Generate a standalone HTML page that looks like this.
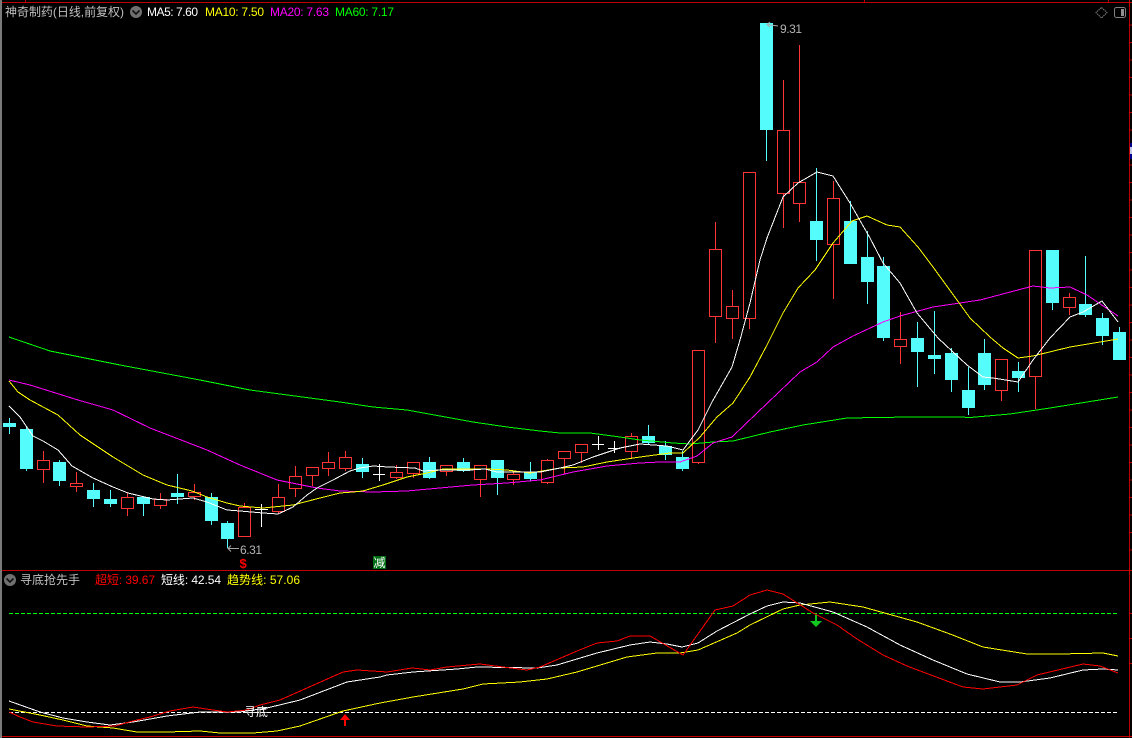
<!DOCTYPE html>
<html><head><meta charset="utf-8"><style>
html,body{margin:0;padding:0;background:#000;width:1132px;height:738px;overflow:hidden}
svg{display:block}
text{font-family:"Liberation Sans","Noto Sans CJK SC","WenQuanYi Zen Hei",sans-serif;font-size:12px}
</style></head><body>
<svg width="1132" height="738" viewBox="0 0 1132 738" xmlns="http://www.w3.org/2000/svg">
<rect width="1132" height="738" fill="#000"/>
<rect x="0" y="0" width="2" height="738" fill="#7a7a7a"/>
<g shape-rendering="crispEdges" fill="none">
<path stroke="#c00000" d="M2 2.5H1132M2 570.5H1132M2 736.5H1132M1129.5 0V738M25.5 0V2M864.5 0V2M1108.5 0V2M1130 613.5h2M1130 638.5h2M1130 663.5h2M1130 570.5h2"/>
<path stroke="#c00000" stroke-width="3" stroke-dasharray="1 16.5" d="M1131 24.5V560" />
<rect x="1130" y="143" width="2" height="16" fill="#000090"/>
<rect x="1130" y="147" width="2" height="7" fill="#c8c8e8"/>

<!-- cyan candles -->
<path stroke="#54fcfc" d="M9.5 418V434M26.5 427V471M59.5 460V486M93.5 483V507M110.5 490V507M143.5 496V516M177.5 474V504M211.5 493V525M227.5 521V548M362.5 458V478M429.5 457V479M463.5 458V472M497.5 460V495M530.5 462V481M648.5 425V445M665.5 441V460M682.5 451V471M766.5 23V161M816.5 168V261M850.5 201V264M867.5 231V304M883.5 257V341M917.5 322V387M934.5 311V374M951.5 348V392M968.5 367V415M984.5 339V390M1018.5 362V392M1052.5 250V310M1085.5 256V317M1102.5 313V345M1119.5 327V360"/>
<path fill="#54fcfc" d="M3 423h13v4h-13zM20 429h13v40h-13zM53 462h13v19h-13zM87 490h13v9h-13zM104 499h13v5h-13zM137 497h13v7h-13zM171 493h13v4h-13zM205 497h13v24h-13zM221 523h13v16h-13zM356 464h13v8h-13zM423 462h13v16h-13zM457 462h13v9h-13zM491 460h13v18h-13zM524 472h13v7h-13zM642 436h13v7h-13zM659 446h13v9h-13zM676 457h13v12h-13zM760 23h13v107h-13zM810 221h13v19h-13zM844 221h13v43h-13zM861 257h13v25h-13zM877 266h13v72h-13zM911 338h13v14h-13zM928 355h13v4h-13zM945 353h13v27h-13zM962 390h13v18h-13zM978 353h13v32h-13zM1012 371h13v7h-13zM1046 250h13v53h-13zM1079 304h13v11h-13zM1096 318h13v18h-13zM1113 332h13v28h-13z"/>

<!-- red candles -->
<path stroke="#ff3434" d="M37.5 460.5h12v9h-12zM43.5 451V460M43.5 470V483
M70.5 483.5h12v3h-12zM76.5 472V483M76.5 487V492
M121.5 497.5h12v11h-12zM127.5 493V497M127.5 509V516
M154.5 499.5h12v6h-12zM160.5 493V499M160.5 506V509
M188.5 492.5h12v4h-12zM194.5 484V492M194.5 497V500
M238.5 507.5h12v29h-12zM244.5 503V507
M272.5 497.5h12v14h-12zM278.5 484V497M278.5 512V514
M289.5 476.5h12v12h-12zM295.5 466V476M295.5 489V497
M306.5 467.5h12v8h-12zM312.5 476V486
M322.5 462.5h12v6h-12zM328.5 452V462M328.5 469V476
M339.5 457.5h12v11h-12zM345.5 451V457M345.5 469V471
M390.5 472.5h12v5h-12zM396.5 465V472M396.5 478V479
M407.5 462.5h12v11h-12zM413.5 474V478
M440.5 465.5h12v6h-12zM446.5 472V476
M474.5 465.5h12v14h-12zM480.5 480V497
M507.5 474.5h12v5h-12zM513.5 472V474M513.5 480V485
M541.5 460.5h12v22h-12zM547.5 459V460M547.5 483V484
M558.5 451.5h12v7h-12zM564.5 459V474
M575.5 444.5h12v8h-12zM581.5 453V463
M625.5 436.5h12v15h-12zM631.5 433V436M631.5 452V458
M692.5 350.5h12v112h-12zM698.5 463V464
M709.5 249.5h12v67h-12zM715.5 222V249M715.5 317V343
M726.5 306.5h12v12h-12zM732.5 290V306M732.5 319V339
M743.5 172.5h12v146h-12zM749.5 319V329
M777.5 130.5h12v63h-12zM783.5 80V130M783.5 194V228
M793.5 182.5h12v21h-12zM799.5 45V182M799.5 204V222
M827.5 198.5h12v46h-12zM833.5 181V198M833.5 245V299
M894.5 339.5h12v7h-12zM900.5 312V339M900.5 347V364
M995.5 359.5h12v31h-12zM1001.5 391V401
M1029.5 250.5h12v126h-12zM1035.5 377V409
M1063.5 297.5h12v10h-12zM1069.5 293V297M1069.5 308V315"/>

<!-- white doji -->
<path stroke="#fff" d="M255 509.5H268M261.5 504V527M373 474.5H385M379.5 464V481M592 444.5H604M598.5 436V450M608 448.5H620M614.5 441V453"/>

<!-- MA lines -->
<polyline stroke="#00ff00" points="9,337 50,351 120,365 200,380 250,390 325,400 340,402 373,407 407,410 440,416 473,422 507,427 540,431 560,433 590,433 620,437 640,440 673,443 690,444 713,442 733,441 770,432 803,425 847,418 910,417 960,417 970,417.5 1010,414 1050,408 1087,402 1118,397"/>
<polyline stroke="#ff00ff" points="9,380 30,385 78,400 113,410 150,428 207,450 240,465 277,480 317,488 340,491 373,492 407,491 440,488 473,485 507,483 540,480 573,472 607,466 640,463 660,462 680,462 697,456 713,443 732,437 757,413 800,372 817,362 833,347 853,336 883,322 900,316 933,307 980,300 1033,286 1050,288 1070,287 1087,295 1118,316"/>
<polyline stroke="#ffff00" points="9,381 18,392 30,400 58,415 80,435 113,457 143,475 167,485 192,491 207,497 227,503 240,506 263,508 293,505 320,498 340,493 353,492 363,491 383,485 407,477 427,473 443,469 487,469 507,470 530,473 560,468 583,467 607,462 640,457 670,453 683,453 700,437 717,417 733,403 750,377 767,345 783,313 798,288 815,270 833,243 852,221 867,216 887,225 900,227 918,247 933,267 957,300 970,318 990,337 1003,348 1018,358 1033,356 1070,347 1100,342 1118,339"/>
<polyline stroke="#ffffff" points="9,406 20,417 33,436 43,441 58,450 72,466 93,478 113,487 128,493 153,499 167,500 193,498 207,502 227,510 240,511 263,513 278,514 293,507 307,495 317,488 333,480 350,471 360,468 373,466 388,467 415,468 423,471 440,470 470,470 485,469 497,472 520,472 540,472 560,468 573,465 593,457 620,448 640,444 667,446 683,450 698,430 712,402 732,367 740,340 750,303 760,260 767,238 783,197 798,183 817,172 833,176 850,203 870,238 883,263 900,283 917,313 938,338 967,365 983,377 993,378 1018,382 1033,360 1050,338 1070,317 1083,312 1102,301 1118,322"/>

<!-- lower panel dashed -->
<path stroke="#00ff00" stroke-dasharray="4 2" d="M9 613.5H1118"/>
<path stroke="#ffffff" stroke-dasharray="4 2" d="M9 712.5H1118"/>

<polyline stroke="#ffff00" points="9,709 40,715 63,720 87,726 113,728 137,732 167,732 200,731 220,733 253,733 277,731 300,726 343,711 380,703 413,697 463,689 483,684 520,682 547,679 577,672 627,657 657,653 680,653 698,650 737,633 750,625 783,609 800,605 830,602 863,607 917,622 950,634 983,647 1027,654 1060,654 1103,653 1118,656"/>
<polyline stroke="#ffffff" points="9,701 40,712 63,718 87,722 110,725 133,722 167,716 200,712 240,712 267,708 300,700 347,682 380,677 387,675 413,672 457,669 477,667 537,668 557,665 597,653 630,645 650,642 667,644 682,647 698,643 717,631 750,614 767,606 783,602 800,603 833,612 867,627 900,645 933,660 967,674 1000,682 1020,682 1050,678 1083,670 1103,669 1118,670"/>
<polyline stroke="#ff0000" points="9,712 20,717 33,722 57,726 87,727 115,726 133,721 150,717 170,711 193,707 213,710 227,712 247,710 260,705 280,700 307,688 343,672 357,670 387,672 412,668 430,670 447,667 480,664 503,667 527,670 540,667 577,651 597,643 617,641 630,636 650,636 683,655 715,610 733,606 750,595 767,590 783,594 813,613 837,625 857,639 883,655 907,666 963,687 983,689 1017,685 1037,675 1083,664 1100,666 1118,673"/>
</g>

<!-- arrows -->
<path fill="#ff0000" d="M345 714l5 6h-4v6h-2v-6h-4z"/>
<path fill="#10c820" d="M815 615h2v6h5l-6 6-6-6h5z"/>
<path fill="none" stroke="#a8a8a8" d="M239 548.5H228M231 545.5L228 548.5L231 551.5"/>
<path fill="none" stroke="#a8a8a8" d="M778 26L767 24.5M770 22L767 24.5L770 27"/>

<!-- header -->
<text x="5" y="16" fill="#c0c0c0" textLength="119">神奇制药(日线,前复权)</text>
<circle cx="136" cy="12" r="6" fill="#707070"/>
<path d="M132.5 10.5L136 14L139.5 10.5" fill="none" stroke="#111" stroke-width="1.6"/>
<text x="147" y="16" fill="#ffffff" textLength="51">MA5: 7.60</text>
<text x="205" y="16" fill="#ffff00" textLength="59">MA10: 7.50</text>
<text x="270" y="16" fill="#ff00ff" textLength="59">MA20: 7.63</text>
<text x="335" y="16" fill="#00ff00" textLength="59">MA60: 7.17</text>

<path d="M1101.5 7.5L1107 12.5L1101.5 18L1096 12.5Z" fill="none" stroke="#808080" stroke-dasharray="1.5 .7"/>
<rect x="1114.5" y="7.5" width="11" height="10" rx="2" fill="none" stroke="#808080"/>
<rect x="1121" y="9" width="3" height="7" fill="#909090"/>

<text x="780" y="33" fill="#b4b4b4" textLength="22">9.31</text>
<text x="240" y="554" fill="#b4b4b4" textLength="22">6.31</text>

<text x="239.5" y="568" fill="#ff0000" font-weight="700" style="font-size:13px">$</text>
<rect x="373" y="556" width="13" height="13" fill="#006e14"/>
<text x="373.500" y="567" fill="#ffffff" style="font-size:12px">减</text>

<!-- lower header -->
<circle cx="10" cy="580" r="6" fill="#707070"/>
<path d="M6.500 578.500L10 582L13.500 578.500" fill="none" stroke="#111" stroke-width="1.600"/>
<text x="20" y="584" fill="#c0c0c0" textLength="60">寻底抢先手</text>
<text x="95" y="584" fill="#ff0000" textLength="60">超短: 39.67</text>
<text x="161" y="584" fill="#ffffff" textLength="60">短线: 42.54</text>
<text x="227" y="584" fill="#ffff00" textLength="73">趋势线: 57.06</text>
<text x="244" y="716" fill="#ffffff" textLength="24">寻底</text>
</svg>
</body></html>
